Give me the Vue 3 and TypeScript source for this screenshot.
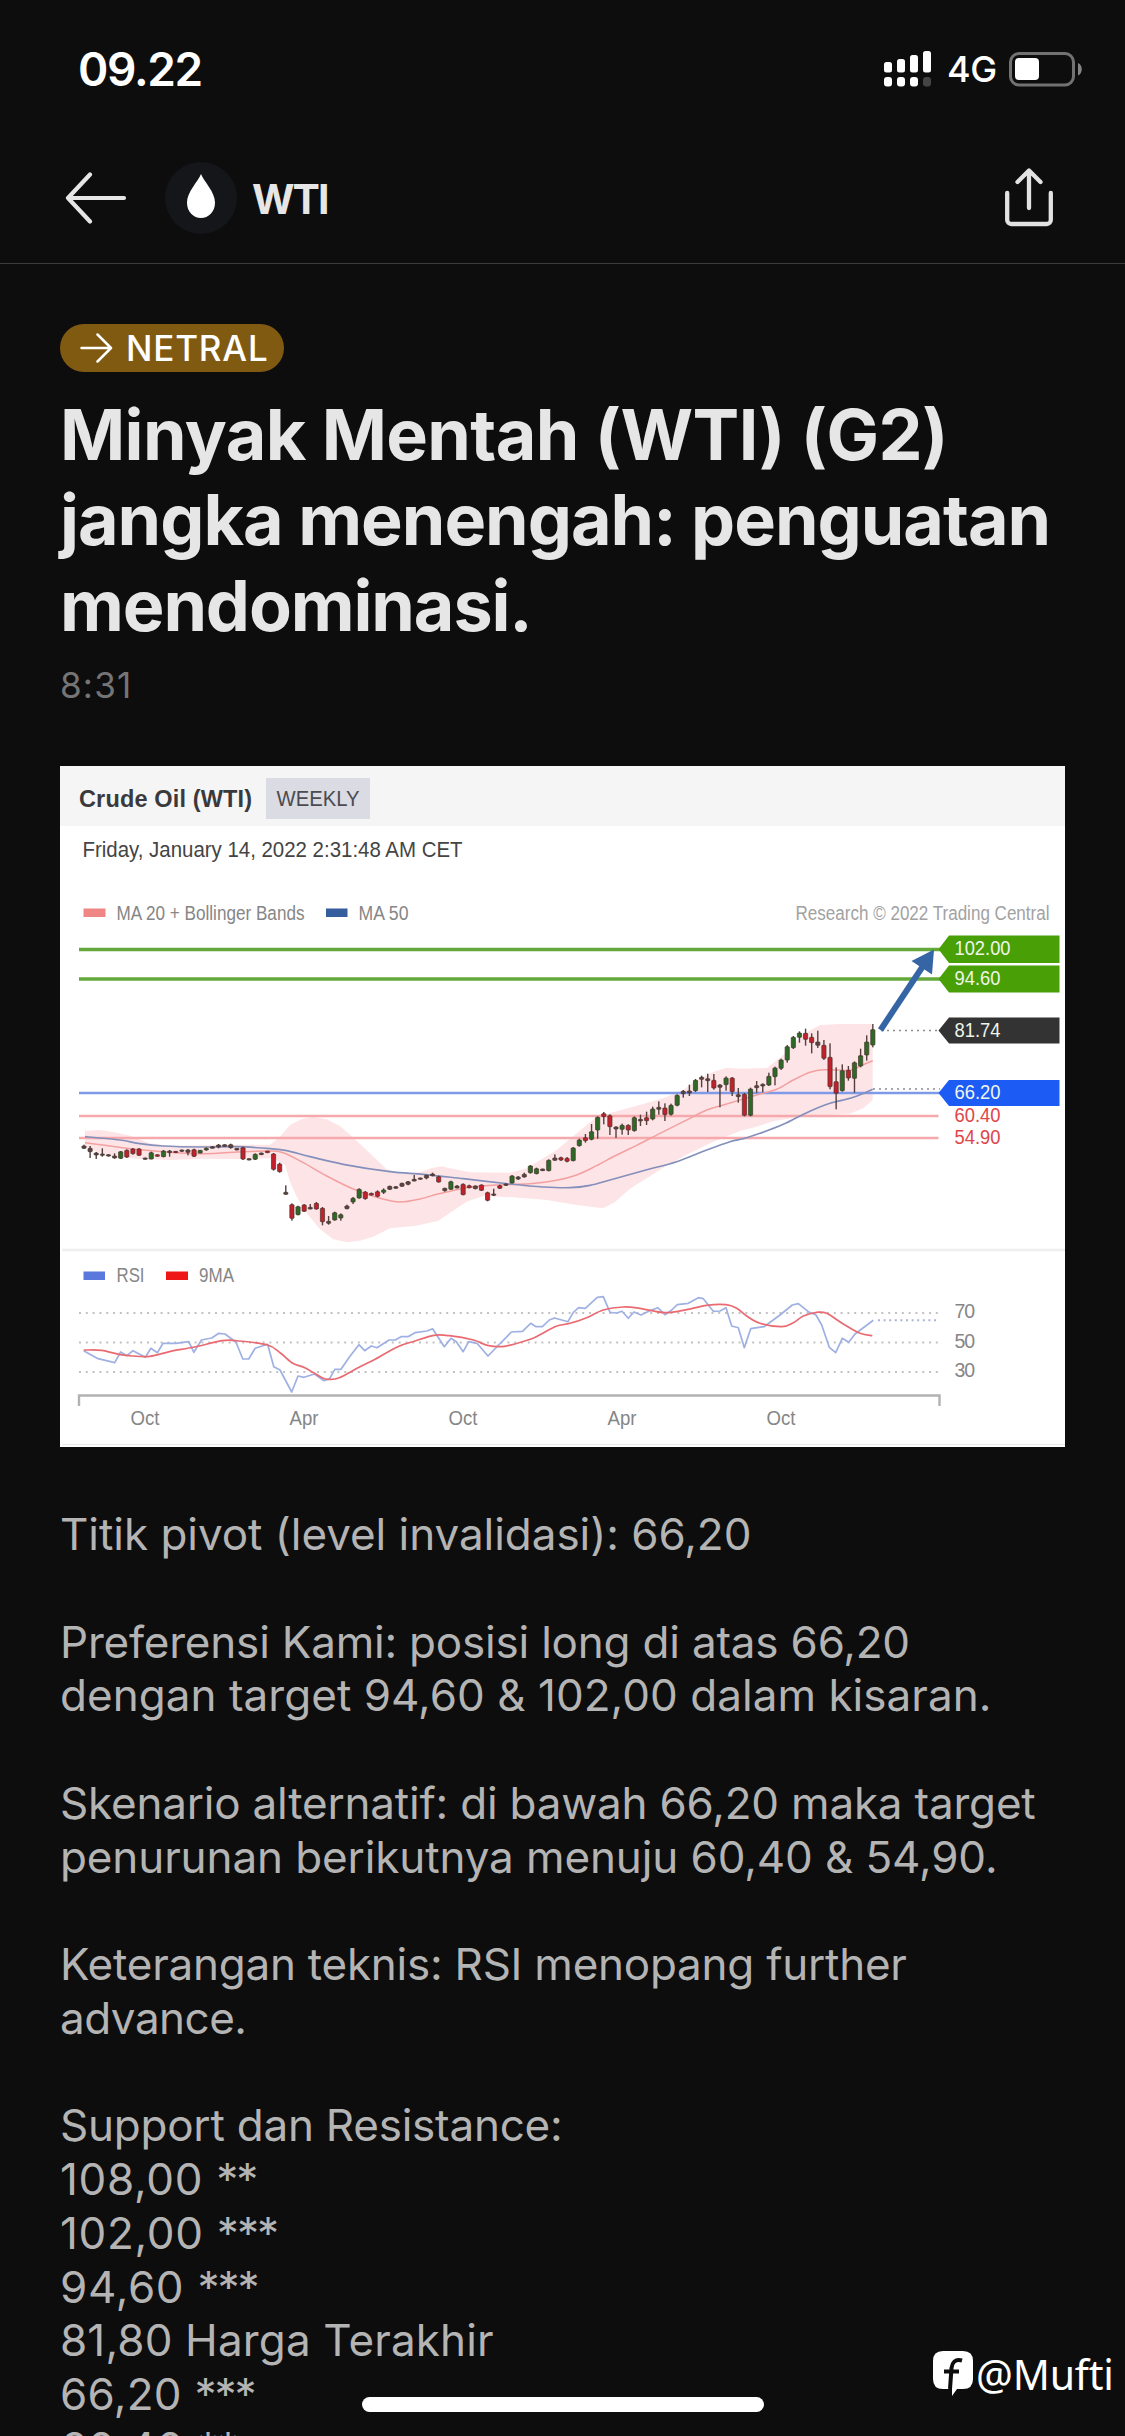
<script setup lang="ts">
type Point = [number, number]
// high, body top, body bottom, low, tone: g = up, r = down, k = flat
type Candle = [number, number, number, number, 'g' | 'r' | 'k']

interface Line { text: string; spacing: number; marks?: string }

const title: Line[] = [
  { text: 'Minyak Mentah (WTI) (G2)', spacing: -0.6 },
  { text: 'jangka menengah: penguatan', spacing: -1 },
  { text: 'mendominasi.', spacing: -1.1 },
]

const body: Line[] = [
  { text: 'Titik pivot (level invalidasi): 66,20', spacing: -0.04 },
  { text: '', spacing: 0 },
  { text: 'Preferensi Kami: posisi long di atas 66,20', spacing: -0.2 },
  { text: 'dengan target 94,60 & 102,00 dalam kisaran.', spacing: 0.04 },
  { text: '', spacing: 0 },
  { text: 'Skenario alternatif: di bawah 66,20 maka target', spacing: -0.2 },
  { text: 'penurunan berikutnya menuju 60,40 & 54,90.', spacing: -0.11 },
  { text: '', spacing: 0 },
  { text: 'Keterangan teknis: RSI menopang further', spacing: -0.24 },
  { text: 'advance.', spacing: -0.5 },
  { text: '', spacing: 0 },
  { text: 'Support dan Resistance:', spacing: -0.23 },
  { text: '108,00 ', spacing: 0.7, marks: '**' },
  { text: '102,00 ', spacing: 0.7, marks: '***' },
  { text: '94,60 ', spacing: 0.7, marks: '***' },
  { text: '81,80 Harga Terakhir', spacing: 0.15 },
  { text: '66,20 ', spacing: 0.3, marks: '***' },
  { text: '60,40 ', spacing: 0.3, marks: '**' },
]

// Weekly candles, in thirds of a pixel below y = 1000.
const candles: Candle[] = [
  [434, 438, 445, 447, 'k'], [438, 445, 455, 474, 'k'], [456, 459, 465, 477, 'k'], [445, 462, 466, 470, 'k'],
  [463, 464, 468, 470, 'k'], [460, 468, 474, 476, 'k'], [453, 455, 475, 477, 'g'], [448, 451, 471, 474, 'r'],
  [444, 447, 461, 464, 'r'], [444, 447, 466, 468, 'r'], [473, 474, 478, 479, 'k'], [455, 458, 477, 478, 'g'],
  [463, 464, 469, 470, 'r'], [450, 453, 470, 472, 'g'], [450, 453, 458, 470, 'k'], [453, 454, 458, 459, 'r'],
  [449, 450, 454, 456, 'k'], [447, 450, 457, 466, 'k'], [446, 449, 469, 471, 'r'], [450, 451, 459, 460, 'g'],
  [442, 445, 450, 452, 'g'], [440, 440, 445, 445, 'k'], [432, 435, 441, 445, 'k'], [433, 434, 439, 440, 'k'],
  [431, 434, 443, 446, 'k'], [444, 445, 450, 451, 'k'], [440, 443, 477, 480, 'r'], [475, 476, 480, 481, 'k'],
  [460, 463, 478, 480, 'g'], [458, 459, 464, 465, 'k'], [453, 453, 458, 458, 'r'], [459, 462, 508, 512, 'r'],
  [488, 492, 515, 518, 'r'], [556, 577, 583, 584, 'k'], [610, 614, 655, 662, 'r'], [617, 620, 644, 646, 'g'],
  [612, 615, 634, 636, 'r'], [612, 622, 627, 628, 'k'], [606, 610, 627, 629, 'r'], [621, 625, 665, 676, 'r'],
  [648, 664, 670, 674, 'k'], [635, 638, 660, 662, 'g'], [640, 644, 654, 662, 'g'], [614, 618, 626, 628, 'k'],
  [591, 595, 606, 612, 'g'], [565, 568, 594, 596, 'g'], [573, 576, 596, 599, 'r'], [578, 580, 585, 587, 'r'],
  [571, 575, 589, 592, 'r'], [565, 570, 577, 582, 'g'], [557, 559, 568, 570, 'k'], [558, 560, 565, 566, 'k'],
  [548, 550, 559, 560, 'k'], [543, 545, 553, 556, 'k'], [525, 538, 543, 544, 'k'], [533, 534, 538, 539, 'k'],
  [524, 526, 534, 538, 'k'], [518, 522, 527, 529, 'k'], [527, 530, 546, 548, 'r'], [563, 565, 572, 575, 'k'],
  [542, 545, 568, 570, 'g'], [555, 558, 564, 565, 'k'], [550, 553, 584, 586, 'r'], [554, 557, 563, 565, 'r'],
  [556, 558, 566, 568, 'k'], [553, 555, 571, 573, 'r'], [575, 578, 601, 604, 'r'], [566, 582, 586, 588, 'k'],
  [554, 557, 565, 567, 'r'], [550, 552, 556, 558, 'k'], [525, 528, 549, 551, 'g'], [528, 531, 537, 540, 'k'],
  [518, 523, 531, 533, 'k'], [495, 498, 518, 521, 'g'], [503, 506, 521, 523, 'g'], [506, 507, 512, 513, 'k'],
  [478, 481, 512, 514, 'g'], [463, 474, 481, 482, 'k'], [470, 473, 480, 483, 'r'], [471, 475, 484, 487, 'r'],
  [441, 444, 482, 484, 'g'], [416, 420, 437, 440, 'g'], [402, 413, 422, 428, 'r'], [372, 395, 418, 421, 'g'],
  [349, 352, 390, 416, 'g'], [336, 341, 350, 373, 'r'], [343, 347, 380, 405, 'r'], [379, 381, 387, 414, 'k'],
  [371, 376, 388, 404, 'g'], [373, 376, 390, 405, 'r'], [349, 353, 392, 395, 'g'], [344, 358, 363, 378, 'k'],
  [335, 353, 362, 375, 'r'], [320, 327, 357, 361, 'g'], [304, 322, 328, 344, 'k'], [310, 324, 344, 363, 'r'],
  [311, 316, 343, 347, 'g'], [283, 286, 316, 319, 'g'], [270, 274, 281, 293, 'k'], [254, 273, 279, 288, 'k'],
  [237, 241, 272, 276, 'g'], [227, 232, 238, 262, 'k'], [221, 236, 242, 276, 'k'], [222, 241, 264, 269, 'r'],
  [252, 255, 262, 322, 'k'], [229, 234, 254, 272, 'g'], [231, 234, 275, 288, 'r'], [264, 284, 290, 308, 'k'],
  [279, 283, 346, 349, 'r'], [263, 267, 346, 349, 'g'], [243, 257, 263, 278, 'k'], [250, 253, 258, 277, 'k'],
  [218, 229, 255, 258, 'g'], [200, 204, 230, 256, 'g'], [176, 180, 205, 210, 'g'], [135, 140, 180, 188, 'g'],
  [108, 112, 143, 147, 'g'], [94, 99, 112, 128, 'g'], [86, 100, 118, 137, 'r'], [100, 112, 128, 160, 'r'],
  [92, 126, 136, 144, 'k'], [120, 136, 175, 180, 'r'], [130, 172, 260, 268, 'r'], [202, 245, 280, 328, 'r'],
  [193, 212, 272, 275, 'g'], [198, 211, 234, 242, 'r'], [184, 188, 235, 278, 'g'], [146, 167, 198, 202, 'g'],
  [106, 126, 165, 182, 'g'], [72, 89, 135, 142, 'g'],
]

const tone = { g: '#2c6a25', r: '#c3202b', k: '#5b4644' }
const candleX = (i: number) => 84 + i * 6.115
const candleY = (v: number) => 1000 + v / 3

const bandPoints: Point[] = [
  [45, 392], [90, 390], [130, 396], [180, 407], [240, 430], [300, 438], [480, 434], [600, 434], [630, 410],
  [660, 375], [695, 357], [730, 350], [770, 358], [810, 378], [850, 413], [900, 460], [950, 508], [1000, 522],
  [1050, 516], [1085, 504], [1115, 499], [1140, 505], [1200, 517], [1320, 518], [1370, 505], [1460, 450],
  [1520, 400], [1580, 350], [1640, 334], [1720, 312], [1790, 291], [1840, 270], [1880, 240], [1930, 215],
  [1970, 203], [2010, 206], [2090, 204], [2140, 165], [2200, 102], [2250, 75], [2310, 72], [2408, 72],
  [2408, 300], [2380, 325], [2340, 341], [2280, 345], [2190, 350], [2110, 364], [2060, 380], [2010, 393],
  [1930, 425], [1850, 464], [1780, 503], [1680, 566], [1635, 606], [1600, 625], [1520, 615], [1430, 600],
  [1330, 592], [1240, 588], [1190, 605], [1140, 638], [1105, 662], [1040, 677], [960, 685], [910, 710],
  [870, 722], [830, 727], [790, 718], [750, 688], [710, 640], [680, 590], [660, 545], [645, 495], [610, 474],
  [520, 478], [400, 476], [300, 480], [200, 476], [120, 470], [60, 448], [45, 440],
]

const ma20: Point[] = [
  [45, 428], [100, 435], [180, 446], [280, 455], [400, 461], [520, 455], [600, 453], [640, 458], [700, 488],
  [770, 528], [850, 567], [930, 595], [990, 606], [1050, 597], [1100, 583], [1130, 576], [1200, 562],
  [1280, 555], [1380, 551], [1460, 541], [1520, 525], [1580, 497], [1640, 465], [1700, 436], [1770, 400],
  [1840, 365], [1910, 330], [1960, 315], [2060, 285], [2120, 268], [2170, 240], [2220, 217], [2260, 209],
  [2340, 211], [2370, 198], [2408, 182],
]
const ma50: Point[] = [
  [45, 410], [150, 420], [210, 431], [280, 438], [400, 441], [500, 440], [600, 446], [650, 452], [720, 470],
  [820, 493], [960, 515], [1060, 523], [1180, 536], [1320, 552], [1420, 561], [1500, 563], [1560, 556],
  [1620, 540], [1720, 512], [1820, 485], [1910, 450], [1980, 425], [2020, 416], [2070, 400], [2140, 373],
  [2210, 338], [2280, 310], [2350, 292], [2408, 268],
]

const rsi: Point[] = [
  [83.7, 332], [98, 356], [114.7, 368], [120.6, 336], [127, 347], [133, 332], [145.4, 352], [150.9, 325],
  [157.4, 338], [163, 310], [175.7, 310], [188.8, 305], [193.9, 337], [201.5, 300], [211.8, 294], [218.7, 280],
  [225, 282], [236, 307], [242.8, 357], [248.7, 357], [255.2, 325], [267.6, 313], [273.8, 380], [280, 390],
  [291.7, 456], [298, 408], [304, 412], [314.5, 402], [324, 422], [329.6, 416], [334.8, 388], [341, 388],
  [349.6, 350], [358.9, 314], [364.7, 332], [371.3, 318], [377, 323], [389, 300], [395.4, 300], [401, 290],
  [408, 290], [415, 278], [427, 273], [432.6, 266], [444.3, 320], [451, 295], [456.3, 305], [463.2, 335],
  [468.7, 305], [477, 310], [488, 348], [497.7, 318], [511.4, 276], [522.5, 274], [530.7, 250], [536, 260],
  [542.4, 260], [549.3, 240], [554.5, 234], [568, 245], [573.3, 217], [578.7, 203], [585.3, 205], [597.3, 172],
  [603.3, 170], [610, 217], [616.7, 219], [622, 214], [628.3, 235], [634, 216], [641, 225], [649.3, 213],
  [657.7, 203], [665, 224], [671.7, 210], [677.3, 194], [688.3, 190], [698.3, 173], [703.3, 176], [713.3, 214],
  [720, 213], [726, 203], [731.7, 258], [738.3, 263], [744.3, 323], [750.7, 266], [764, 260], [780, 225],
  [792.3, 195], [798.3, 191], [808.3, 215], [816, 225], [821.7, 255], [829.3, 322], [835.7, 338], [842.3, 295],
  [848.7, 307], [855, 282], [873.3, 241],
]
const rsiAverage: Point[] = [
  [83.7, 330], [101.7, 331], [118.9, 343], [132.6, 348], [149.9, 349], [170.5, 334], [194.6, 321], [222, 302],
  [236, 302], [267.6, 315], [280.7, 340], [292.8, 370], [304.8, 383], [322, 413], [329, 418], [339.3, 413],
  [360, 380], [373.7, 360], [397.8, 320], [415, 303], [434, 286], [449.4, 287], [473.6, 300], [487.3, 316],
  [504.5, 319], [528.7, 299], [539, 286], [556.2, 259], [570, 250], [586.7, 233], [603.3, 210], [623.3, 201],
  [640, 205], [665, 218], [686.7, 209], [706.7, 196], [726, 194], [736.7, 205], [746.7, 228], [760, 250],
  [781.7, 260], [793.3, 248], [803.3, 228], [816.7, 217], [826.7, 220], [843.3, 252], [860, 280], [872.3, 287],
]

// Catmull-Rom spline through the sampled points.
function smooth(points: Point[]): string {
  let d = `M${points[0][0].toFixed(1)} ${points[0][1].toFixed(1)}`
  for (let i = 0; i < points.length - 1; i++) {
    const a = points[i - 1] ?? points[i]
    const b = points[i]
    const c = points[i + 1]
    const e = points[i + 2] ?? c
    const n = [b[0] + (c[0] - a[0]) / 6, b[1] + (c[1] - a[1]) / 6, c[0] - (e[0] - b[0]) / 6, c[1] - (e[1] - b[1]) / 6, c[0], c[1]]
    d += 'C' + n.map(v => v.toFixed(1)).join(' ')
  }
  return d
}
const price = (p: Point[]): Point[] => p.map(([x, y]) => [70 + x / 3, 1000 + y / 3])
const momentum = (p: Point[]): Point[] => p.map(([x, y]) => [x, 1240 + y / 3])

const bandPath = 'M' + price(bandPoints).map(p => p.map(v => v.toFixed(1)).join(' ')).join('L') + 'Z'
const ma20Path = smooth(price(ma20))
const ma50Path = smooth(price(ma50))
const rsiPath = 'M' + momentum(rsi).map(p => p.map(v => v.toFixed(1)).join(' ')).join('L')
const rsiAveragePath = smooth(momentum(rsiAverage))

const tags = [
  { label: '102.00', top: 935.5, h: 27.5, fill: '#48a006', w: 56 },
  { label: '94.60', top: 965.5, h: 27, fill: '#48a006', w: 46 },
  { label: '81.74', top: 1017.5, h: 26, fill: '#333', w: 46 },
  { label: '66.20', top: 1080, h: 26, fill: '#1c5cf5', w: 46 },
]
const months = [
  { label: 'Oct', x: 131 }, { label: 'Apr', x: 290 }, { label: 'Oct', x: 449 }, { label: 'Apr', x: 608 }, { label: 'Oct', x: 767 },
]
const levels = [
  { label: '70', y: 1313 }, { label: '50', y: 1342.5 }, { label: '30', y: 1372 },
]
</script>

<template>
  <main class="screen">
    <header class="status">
      <span class="clock">09.22</span>
      <div class="status-right">
        <svg class="signal" width="48" height="36" viewBox="0 0 48 36" fill="#fff">
          <rect x="0" y="11" width="8" height="10.5" rx="2.5" />
          <rect x="13" y="8" width="8" height="13.5" rx="2.5" />
          <rect x="26" y="4" width="8" height="17.5" rx="2.5" />
          <rect x="39" y="0" width="8" height="21.5" rx="2.5" />
          <rect x="0" y="26" width="8" height="9.5" rx="3" />
          <rect x="13" y="26" width="8" height="9.5" rx="3" />
          <rect x="26" y="26" width="8" height="9.5" rx="3" />
          <rect x="39" y="26" width="8" height="9.5" rx="3" fill="#444" />
        </svg>
        <span class="network">4G</span>
        <svg class="battery" width="75" height="35" viewBox="0 0 75 35">
          <rect x="1.5" y="1.5" width="63" height="31.5" rx="8.5" fill="none" stroke="#727272" stroke-width="3" />
          <rect x="6" y="6" width="24" height="22" rx="4" fill="#fff" />
          <path d="M69 11c5 2 5 10.500 0 12.500z" fill="#858585" />
        </svg>
      </div>
    </header>

    <nav class="topbar">
      <svg class="back" width="62" height="52" viewBox="0 0 62 52" fill="none" stroke="#e6e6e6" stroke-width="4.200" stroke-linecap="round" stroke-linejoin="round">
        <path d="M59 26H3M25 2.500L3 26l22 23.500" />
      </svg>
      <svg class="asset" width="72" height="72" viewBox="0 0 72 72">
        <circle cx="36" cy="36" r="36" fill="#14161a" />
        <path d="M36 12C33 19.500 22 30 22 40.500C22 50 28.500 56 36 56S50 50 50 40.500C50 30 39 19.500 36 12Z" fill="#fff" />
      </svg>
      <span class="symbol">WTI</span>
      <svg class="share" width="50" height="60" viewBox="0 0 50 60" fill="none" stroke="#e2e2e2" stroke-width="4.300" stroke-linecap="round" stroke-linejoin="round">
        <path d="M3.200 25v27a4 4 0 0 0 4 4h35.600a4 4 0 0 0 4-4V25M25 40V3M13.500 14L25 2.500L36.500 14" />
      </svg>
    </nav>

    <article class="article">
      <div class="badge">
        <svg width="34" height="30" viewBox="0 0 34 30" fill="none" stroke="#fff" stroke-width="2.500" stroke-linecap="round" stroke-linejoin="round">
          <path d="M1.500 15H31M17.500 1.500L31 15L17.500 28.500" />
        </svg>
        <span>NETRAL</span>
      </div>
      <h1 class="title">
        <span v-for="line in title" :key="line.text" :style="{ letterSpacing: line.spacing + 'px' }">{{ line.text }}</span>
      </h1>
      <time class="time">8:31</time>

      <svg class="chart" width="1005" height="681" viewBox="60 766 1005 681">
        <rect x="60" y="766" width="1005" height="681" fill="#fff" />
        <rect x="60" y="766" width="1005" height="60" fill="#f5f5f6" />
        <text x="79" y="806.500" class="bold" font-size="23.500" fill="#3a3a3c" textLength="173">Crude Oil (WTI)</text>
        <rect x="266" y="778" width="104" height="41" fill="#dadbe3" />
        <text x="276.500" y="805.500" font-size="22" fill="#4b4b50" textLength="83" lengthAdjust="spacingAndGlyphs">WEEKLY</text>
        <text x="82.500" y="856.500" font-size="22" fill="#444" textLength="380" lengthAdjust="spacingAndGlyphs">Friday, January 14, 2022 2:31:48 AM CET</text>

        <g font-size="19.500" fill="#868686">
          <rect x="83.500" y="908.500" width="22" height="8.500" fill="#f08585" />
          <text x="116.500" y="919.500" textLength="188" lengthAdjust="spacingAndGlyphs">MA 20 + Bollinger Bands</text>
          <rect x="326" y="908.500" width="21.500" height="8.500" fill="#345e9e" />
          <text x="358.500" y="919.500" textLength="50" lengthAdjust="spacingAndGlyphs">MA 50</text>
          <text x="795.500" y="919.500" fill="#a2a2a2" textLength="254" lengthAdjust="spacingAndGlyphs">Research © 2022 Trading Central</text>
        </g>

        <path :d="bandPath" fill="#fde5e7" />
        <g fill="none">
          <path d="M79 949.500H942M79 979H942" stroke="#63a83b" stroke-width="3.400" />
          <path d="M79 1093H942" stroke="#7f9ae8" stroke-width="2.600" />
          <path d="M79 1116H938.500M79 1138H938.500" stroke="#f5a9ac" stroke-width="2.400" />
          <path :d="ma20Path" stroke="#f3a0a0" stroke-width="1.500" />
          <path :d="ma50Path" stroke="#8490bb" stroke-width="1.700" />
        </g>

        <g v-for="(c, i) in candles" :key="i">
          <rect :x="candleX(i) - 0.7" :y="candleY(c[0])" width="1.400" :height="(c[3] - c[0]) / 3" fill="#55403e" />
          <rect :x="candleX(i) - 2.1" :y="candleY(c[1])" width="4.200" :height="(c[2] - c[1]) / 3" rx="0.600" :fill="tone[c[4]]" stroke="#47352f" stroke-width="0.700" />
        </g>

        <path d="M881 1030.500H940M873 1089H940" stroke="#8c8c8c" stroke-width="1.600" stroke-dasharray="2 4" fill="none" />
        <path d="M880.500 1030L923 966" stroke="#3565a5" stroke-width="6" />
        <path d="M934 949.500L911.500 961L932 974.500Z" fill="#3565a5" />

        <g v-for="t in tags" :key="t.label">
          <path :d="`M938.500 ${t.top + t.h / 2}L949 ${t.top}H1059.500V${t.top + t.h}H949Z`" :fill="t.fill" />
          <text x="954.500" :y="t.top + t.h / 2 + 6.2" font-size="19.500" fill="#f0f5ea" :textLength="t.w" lengthAdjust="spacingAndGlyphs">{{ t.label }}</text>
        </g>
        <g font-size="19.500" fill="#e04548">
          <text x="954.500" y="1122" textLength="46" lengthAdjust="spacingAndGlyphs">60.40</text>
          <text x="954.500" y="1144" textLength="46" lengthAdjust="spacingAndGlyphs">54.90</text>
        </g>

        <path d="M62 1250H1065" stroke="#efefef" stroke-width="2.500" />
        <g font-size="19.500" fill="#868686">
          <rect x="83.500" y="1271.500" width="21.500" height="8.500" fill="#5b79dd" />
          <text x="116.500" y="1282" textLength="28" lengthAdjust="spacingAndGlyphs">RSI</text>
          <rect x="166" y="1271.500" width="22" height="8.500" fill="#ee1616" />
          <text x="199" y="1282" textLength="35" lengthAdjust="spacingAndGlyphs">9MA</text>
        </g>

        <g v-for="l in levels" :key="l.label">
          <path :d="`M79 ${l.y}H940`" stroke="#c2c2c2" stroke-width="2" stroke-dasharray="2 4.800" />
          <text x="954.500" :y="l.y + 5" font-size="19.500" fill="#868686" textLength="20.500">{{ l.label }}</text>
        </g>
        <path d="M878 1320.300H938" stroke="#aab4d8" stroke-width="2" stroke-dasharray="2 3.600" />
        <g fill="none" stroke-linejoin="round">
          <path :d="rsiPath" stroke="#9fb0e3" stroke-width="1.700" />
          <path :d="rsiAveragePath" stroke="#ea6a72" stroke-width="1.700" />
        </g>
        <path d="M79 1406V1395.500H939.500V1406" stroke="#b2b2b2" stroke-width="2.400" fill="none" />
        <text v-for="m in months" :key="m.x" :x="m.x - 0.5" y="1425" font-size="19.500" fill="#868686" textLength="29" lengthAdjust="spacingAndGlyphs">{{ m.label }}</text>
        <path d="M62 1444.500H1065" stroke="#e9e9e9" stroke-width="1" />
      </svg>

      <div class="body">
        <p v-for="(line, i) in body" :key="i" :style="{ letterSpacing: line.spacing + 'px' }">{{ line.text }}<span v-if="line.marks" class="marks">{{ line.marks }}</span></p>
      </div>
    </article>

    <div class="home-indicator"></div>
    <div class="watermark">
      <svg width="40" height="46" viewBox="0 0 40 46">
        <path d="M10 0H30Q40 0 40 10V28Q40 38 30 38H24L19 45V38H10Q0 38 0 28V10Q0 0 10 0Z" fill="#fff" />
        <path d="M29 9.500C22 7.500 19 12 18.500 17L17 38M11 20.500H26" fill="none" stroke="#0d0d0d" stroke-width="4" />
      </svg>
      <span>@Mufti</span>
    </div>
  </main>
</template>

<style>
body { margin: 0; background: #0d0d0d; }
</style>

<style scoped>
.screen {
  position: relative;
  width: 1125px;
  height: 2436px;
  overflow: hidden;
  background: #0d0d0d;
  font-family: Inter, "Liberation Sans", sans-serif;
}
.status {
  display: flex;
  justify-content: space-between;
  align-items: center;
  height: 138px;
  padding: 0 41px 0 78px;
  box-sizing: border-box;
}
.clock { color: #fff; font-size: 46px; font-weight: 600; letter-spacing: -1.300px; }
.status-right { display: flex; align-items: center; }
.network { width: 62px; padding-left: 15px; box-sizing: border-box; color: #fff; font-size: 36px; font-weight: 500; letter-spacing: -0.500px; white-space: nowrap; margin-right: 15px; }
.topbar {
  display: flex;
  align-items: center;
  height: 126px;
  padding: 5px 71px 9px 65px;
  box-sizing: border-box;
  border-bottom: 1px solid #3a3a3a;
}
.back, .asset, .share { position: relative; top: -1px; }
.asset { margin-left: 38px; }
.symbol { margin-left: 15px; color: #e6e6e6; font-size: 41px; font-weight: 700; letter-spacing: -2px; }
.share { margin-left: auto; }
.article { display: flex; flex-direction: column; align-items: flex-start; padding: 60px 60px 0; }
.badge {
  display: flex;
  align-items: center;
  gap: 12px;
  width: 224px;
  height: 48px;
  padding-left: 20px;
  box-sizing: border-box;
  border-radius: 24px;
  background: #815a12;
  color: #fff;
  font-size: 35px;
  font-weight: 500;
  letter-spacing: 0.800px;
}
.title { display: flex; flex-direction: column; margin: 19.500px 0 0; color: #e6e6e6; font-size: 70px; line-height: 85.700px; font-weight: 700; white-space: nowrap; }
.time { margin-top: 13.400px; height: 60px; color: #757575; font-size: 35px; line-height: 46px; letter-spacing: 1.200px; }
.chart { display: block; margin-top: 44px; font-family: "Liberation Sans", Arial, sans-serif; }
.bold { font-weight: 700; }
.body { margin-top: 61px; color: #b4b4b4; font-size: 44px; line-height: 53.750px; white-space: nowrap; }
.body p { height: 53.750px; margin: 0; white-space: pre; }
.marks { letter-spacing: -2px; }
.home-indicator { position: absolute; left: 362px; top: 2397px; width: 402px; height: 15px; border-radius: 8px; background: #fff; }
.watermark { position: absolute; left: 933px; top: 2349px; display: flex; align-items: center; gap: 3px; color: #fff; font-family: "Noto Sans", "Open Sans", sans-serif; font-size: 41px; line-height: 50px; letter-spacing: -0.200px; }
</style>
